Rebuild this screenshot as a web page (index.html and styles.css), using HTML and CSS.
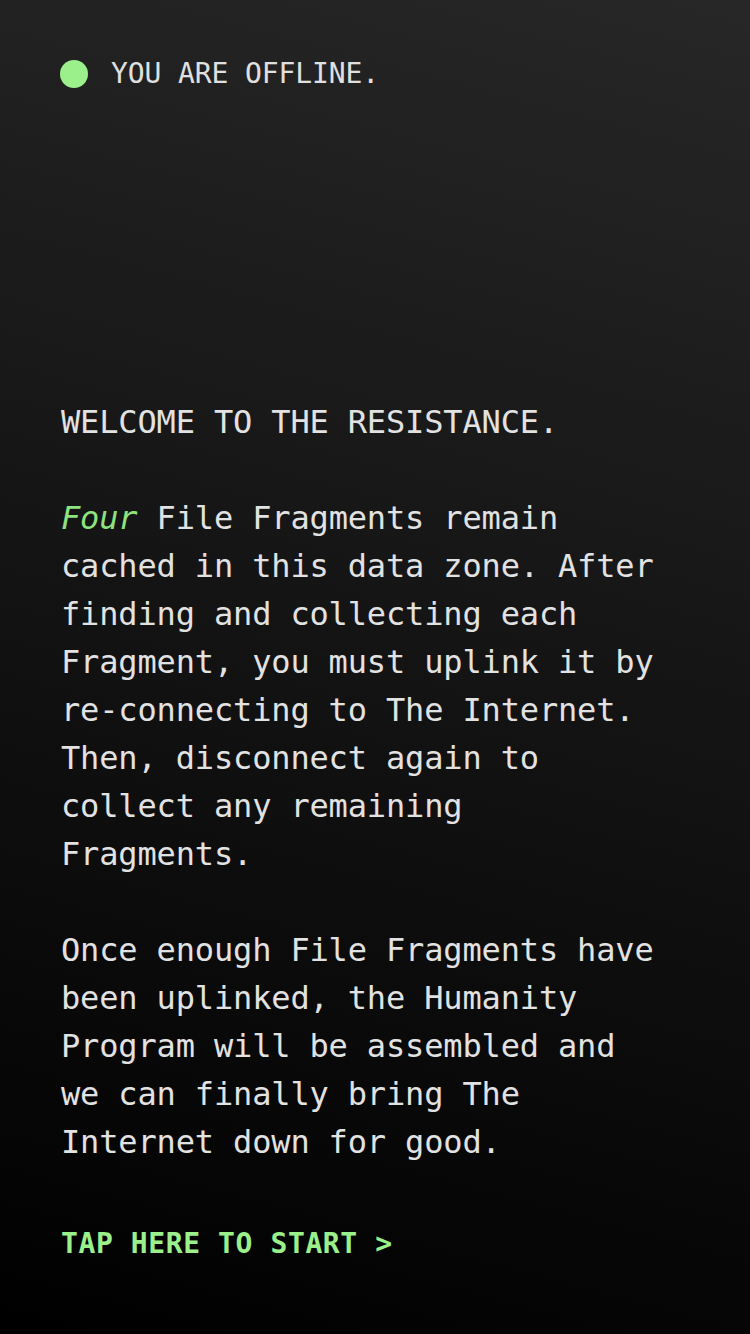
FILE: index.html
```html
<!DOCTYPE html>
<html lang="en">
<head>
<meta charset="utf-8">
<title>You are offline</title>
<link rel="stylesheet" href="styles.css">
</head>
<body>
<main class="screen">
  <header class="status">
    <span class="dot"></span>
    <span class="status-text">YOU ARE OFFLINE.</span>
  </header>
  <section class="story">
    <p class="title">WELCOME TO THE RESISTANCE.</p>
    <p><em class="hl">Four</em> File Fragments remain cached in this data zone. After finding and collecting each Fragment, you must uplink it by re-connecting to The Internet. Then, disconnect again to collect any remaining Fragments.</p>
    <p>Once enough File Fragments have been uplinked, the Humanity Program will be assembled and we can finally bring The Internet down for good.</p>
  </section>
  <a class="start" href="#">TAP HERE TO START &gt;</a>
</main>
</body>
</html>
```

FILE: styles.css
```css
html, body {
  margin: 0;
  padding: 0;
  height: 100%;
}
body {
  background: linear-gradient(195deg, #272727 0%, #151515 45%, #000 100%);
  font-family: "DejaVu Sans Mono", "Liberation Mono", monospace;
  color: #e2e2e2;
}
.screen {
  min-height: 1334px;
  box-sizing: border-box;
  padding: 56px 62px 0 61px;
  display: flex;
  flex-direction: column;
}
.status {
  display: flex;
  align-items: center;
  gap: 23px;
  height: 36px;
}
.dot {
  width: 28px;
  height: 28px;
  margin-left: -1px;
  border-radius: 50%;
  background: #9bf08b;
  flex: none;
}
.status-text {
  font-size: 28px;
  line-height: 36px;
  letter-spacing: -0.1px;
  color: #e0e0e0;
}
.story {
  margin-top: 306px;
  width: 606px;
  font-size: 32px;
  line-height: 48px;
  letter-spacing: -0.15px;
}
.story p {
  margin: 0 0 48px 0;
}
.story p:last-child {
  margin-bottom: 0;
}
.hl {
  color: #8fe37f;
  font-style: italic;
}
.start {
  margin-top: 54px;
  font-size: 28px;
  line-height: 48px;
  font-weight: bold;
  color: #9bf08b;
  text-decoration: none;
  letter-spacing: 0.6px;
  align-self: flex-start;
}
```
